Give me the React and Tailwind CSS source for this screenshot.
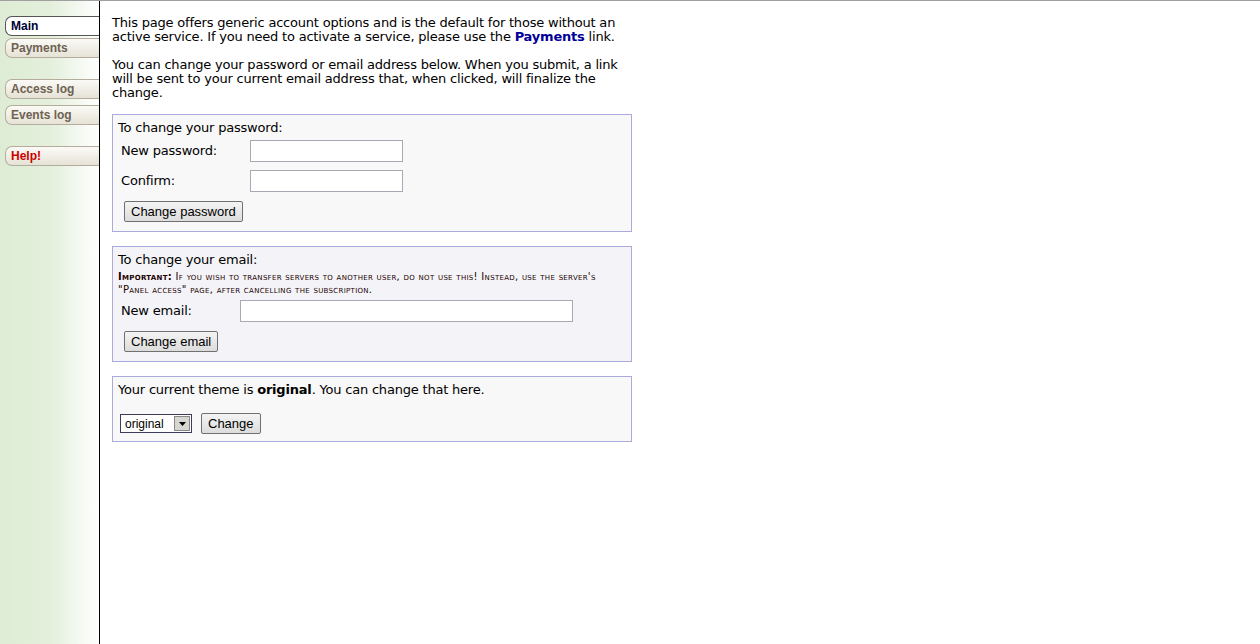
const verdana = { fontFamily: '"DejaVu Sans", Verdana, sans-serif' };

const Tab = ({ label, active, red }) => (
  <div
    className={
      "h-[20px] ml-[5px] pl-[5px] flex items-center rounded-l-[7px] border border-r-0 text-[12px] font-bold " +
      (active
        ? "bg-white border-[#555555] text-[#000033]"
        : "bg-gradient-to-b from-[#fbfaf6] to-[#e6e2d6] border-[#b5ad9c] " + (red ? "text-[#cc0000]" : "text-[#6e6252]"))
    }
    style={{ fontFamily: '"Liberation Sans", Arial, sans-serif' }}
  >
    {label}
  </div>
);

const Btn = ({ children }) => (
  <button
    className="h-[21px] px-[6px] border border-[#707070] rounded-[2px] bg-gradient-to-b from-[#f4f4f4] to-[#dcdcdc] text-[13px] text-black leading-none tracking-normal"
    style={{ fontFamily: '"Liberation Sans", Arial, sans-serif' }}
  >
    {children}
  </button>
);

export default function App() {
  return (
    <div className="w-[1260px] h-[644px] flex border-t border-[#a0a0a0] bg-white overflow-hidden" style={verdana}>
      <div className="w-[100px] shrink-0 border-r border-black bg-gradient-to-r from-[#deecd5] via-[#e3efdb] to-white pt-[15px] flex flex-col">
        <Tab label="Main" active />
        <div className="h-[2px]" />
        <Tab label="Payments" />
        <div className="h-[21px]" />
        <Tab label="Access log" />
        <div className="h-[6px]" />
        <Tab label="Events log" />
        <div className="h-[21px]" />
        <Tab label="Help!" red />
      </div>

      <div className="pl-[12px] pt-[15px] w-[532px] text-[13px] leading-[14px] tracking-[-0.2px] text-black">
        <p>
          This page offers generic account options and is the default for those without an active service. If you
          need to activate a service, please use the <b className="text-[#000099]">Payments</b> link.
        </p>
        <p className="mt-[14px]">
          You can change your password or email address below. When you submit, a link will be sent to your current
          email address that, when clicked, will finalize the change.
        </p>

        <div className="mt-[14px] w-[520px] border border-[#aaaadd] bg-[#f8f8f8] px-[5px] pt-[6px] pb-[9px]">
          <div>To change your password:</div>
          <div className="mt-[5px] flex items-center h-[22px]">
            <span className="w-[132px] pl-[3px]">New password:</span>
            <input className="w-[153px] h-[22px] bg-white border border-[#a9a9b3]" />
          </div>
          <div className="mt-[8px] flex items-center h-[22px]">
            <span className="w-[132px] pl-[3px]">Confirm:</span>
            <input className="w-[153px] h-[22px] bg-white border border-[#a9a9b3]" />
          </div>
          <div className="mt-[9px] pl-[6px]">
            <Btn>Change password</Btn>
          </div>
        </div>

        <div className="mt-[14px] w-[520px] border border-[#aaaadd] bg-[#f4f4f8] px-[5px] pt-[6px] pb-[9px]">
          <div>To change your email:</div>
          <div className="mt-[3px] text-[10px] leading-[13px] tracking-[0.3px] text-[#220000]" style={{ fontVariant: "small-caps" }}>
            <b>Important:</b> If you wish to transfer servers to another user, do not use this! Instead, use the
            server's <span className="whitespace-nowrap">"Panel access"</span> page, after cancelling the subscription.
          </div>
          <div className="mt-[4px] flex items-center h-[22px]">
            <span className="w-[122px] pl-[3px]">New email:</span>
            <input className="w-[333px] h-[22px] bg-white border border-[#a9a9b3]" />
          </div>
          <div className="mt-[9px] pl-[6px]">
            <Btn>Change email</Btn>
          </div>
        </div>

        <div className="mt-[14px] w-[520px] border border-[#aaaadd] bg-[#f8f8f8] px-[5px] pt-[6px] pb-[7px]">
          <div>
            Your current theme is <b>original</b>. You can change that here.
          </div>
          <div className="mt-[16px] flex items-center gap-[9px] pl-[2px]">
            <div className="w-[72px] h-[19px] border border-[#3c3c5c] bg-white flex items-center justify-between text-[12px] pl-[4px] tracking-normal" style={{ fontFamily: '"Liberation Sans", Arial, sans-serif' }}>
              <span>original</span>
              <span className="w-[16px] h-[15px] mr-[1px] bg-[#d8d6d0] border border-[#888] flex items-center justify-center">
                <svg width="7" height="4" viewBox="0 0 7 4"><path d="M0 0h7L3.5 4z" fill="#000" /></svg>
              </span>
            </div>
            <Btn>Change</Btn>
          </div>
        </div>
      </div>
    </div>
  );
}
